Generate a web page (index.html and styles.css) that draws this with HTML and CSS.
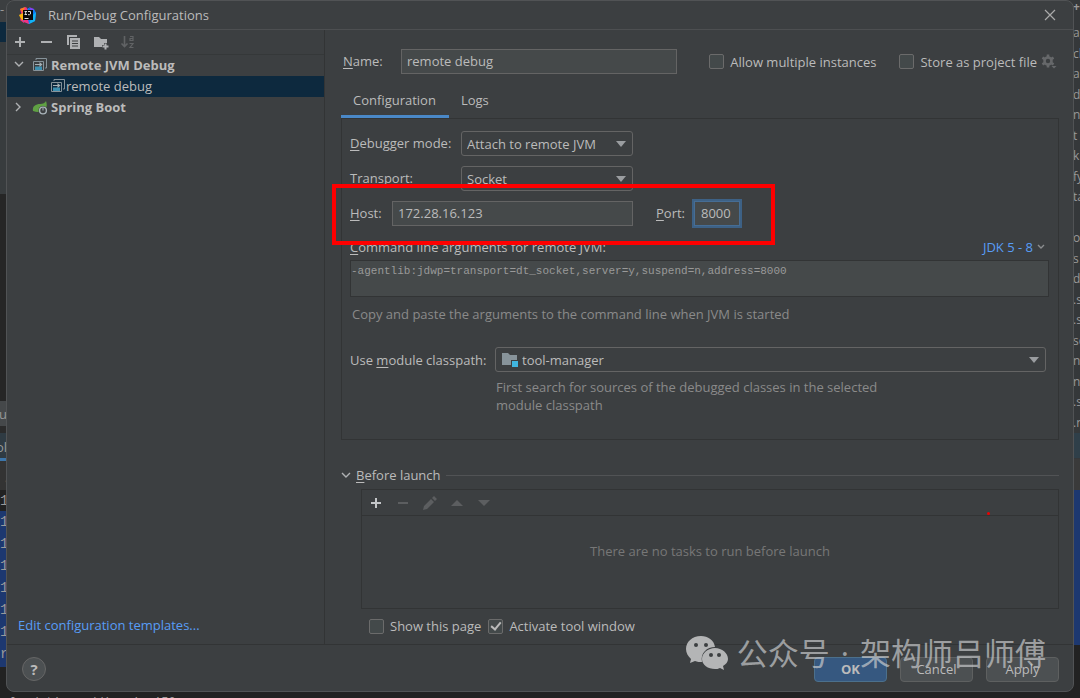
FILE: index.html
```html
<!DOCTYPE html>
<html lang="en">
<head>
<meta charset="utf-8">
<title>Run/Debug Configurations</title>
<link rel="stylesheet" href="styles.css">
</head>
<body>
<div class="ide" aria-hidden="true">
  <div class="ide-top">request.getting/mm</div>
  <div class="ide-left">
    <i class="l-head">-</i><i class="l-sel"></i><i class="l-tree"></i><i class="l-edit"></i><i class="l-tab">ru</i><i class="l-gap"></i><i class="l-active">ol</i><i class="l-bar">a</i><i class="l-line">1</i>
    <i class="l-mark">1</i><i class="l-mark">1</i><i class="l-mark">1</i><i class="l-mark">1</i><i class="l-mark">1</i><i class="l-mark">1</i><i class="l-mark">r</i>
  </div>
  <div class="ide-right">
    <i class="r-plus">+</i><i>ag</i><i>cle</i><i>an</i><i>d</i><i>np</i><i>t</i><i>k</i><i>fy</i><i>ta</i><i></i><i>ole</i><i>s</i><i>d</i><i>.s</i><i>.s</i><i>sc</i><i>n.</i><i>n.</i><i>.s</i><i>.n</i>
    <i class="r-tab"></i><i class="r-bar"></i><i class="r-mark"></i>
  </div>
  <div class="ide-bottom">load time adding in 150</div>
</div>

<div class="dialog" role="dialog" aria-labelledby="dlg-title">
  <header class="titlebar">
    <svg class="logo" width="18" height="18" viewBox="0 0 18 18"><path d="M1 3 7 1l3 4-5 12-4-3 2-4z" fill="#f5317f"/><path d="M1 3 6 1 4 7z" fill="#fc801d"/><path d="m0 9 4-2 2 9-4-3z" fill="#fdb60d"/><path d="m9 2 6 1 2 4-1 8-6 3-6-3z" fill="#087cfa"/><path d="m10 1 5 2-2 3z" fill="#8b3df0"/><path d="m4 12 5 1 1 5-5-2z" fill="#f5317f"/><path d="m13 10 4-4-1 9-6 3z" fill="#12b5f5"/><path d="M4 4h10v10H4z" fill="#090909"/><path d="M5.500 5.500h2.500M6.700 5.500v3M5.500 8.500h2.500M9 5.500h2.500v2.500l-1 .7H9M5.500 12.500h4" stroke="#ddd" fill="none"/></svg>
    <h1 id="dlg-title">Run/Debug Configurations</h1>
    <button class="icon-btn close" aria-label="Close"><svg width="12" height="12" viewBox="0 0 12 12"><path d="m1 1 10 10M11 1 1 11" stroke="#aaa" stroke-width="1.200"/></svg></button>
  </header>

  <div class="content">
    <aside class="sidebar">
      <div class="toolbar">
        <button class="icon-btn" aria-label="Add"><svg width="16" height="16" viewBox="0 0 16 16"><path d="M8 3v10M3 8h10" stroke="#afb1b3" stroke-width="2"/></svg></button>
        <button class="icon-btn" aria-label="Remove"><svg width="16" height="16" viewBox="0 0 16 16"><path d="M2 8h11" stroke="#afb1b3" stroke-width="2"/></svg></button>
        <button class="icon-btn" aria-label="Copy"><svg width="16" height="16" viewBox="0 0 16 16"><path d="M2 11V2h9" fill="none" stroke="#afb1b3" stroke-width="2"/><path d="M4 4h10v11H4z" fill="#afb1b3"/><path d="M6 7h6M6 9.500h6M6 12h6" stroke="#3c3f41"/></svg></button>
        <button class="icon-btn" aria-label="New folder"><svg width="16" height="16" viewBox="0 0 16 16"><path d="M1 3h5l2 2h6v4h-3v2H9v2H1z" fill="#afb1b3"/><path d="M12.500 9.500v6M9.500 12.500h6" stroke="#afb1b3" stroke-width="2"/></svg></button>
        <button class="icon-btn" aria-label="Sort" disabled><svg width="16" height="16" viewBox="0 0 16 16"><path d="M4.500 2v10M1.500 9.500l3 3 3-3" fill="none" stroke="#616365" stroke-width="1.600"/><path d="M10 2.500h3v4h-3V4.500h3M9.500 9.500h3.500l-3 4h3.500" fill="none" stroke="#616365" stroke-width="1.200"/></svg></button>
      </div>
      <ul class="tree">
        <li class="node group">
          <svg class="chev" width="10" height="10" viewBox="0 0 10 10"><path d="m1 2 4 4 4-4" fill="none" stroke="#afb1b3" stroke-width="1.400"/></svg>
          <svg width="16" height="16" viewBox="0 0 16 16"><path d="M4 3V1.500h10.500V11H13" fill="none" stroke="#87939a"/><path d="M1.500 4.500h10v9h-10z" fill="#3c3f41" stroke="#87939a"/><path d="M3 9.500h7V13H3z" fill="#3d8fb0"/><path d="M3 7.500h5" stroke="#a6b0b5"/><path d="m7.500 5 3 2.500-3 2.500z" fill="#a6b0b5"/></svg>
          <span>Remote JVM Debug</span>
        </li>
        <li class="node leaf selected">
          <svg width="16" height="16" viewBox="0 0 16 16"><path d="M4 3V1.500h10.500V11H13" fill="none" stroke="#87939a"/><path d="M1.500 4.500h10v9h-10z" fill="#0d293e" stroke="#87939a"/><path d="M3 9.500h7V13H3z" fill="#3d8fb0"/><path d="M3 7.500h5" stroke="#a6b0b5"/><path d="m7.500 5 3 2.500-3 2.500z" fill="#a6b0b5"/></svg>
          <span>remote debug</span>
        </li>
        <li class="node group">
          <svg class="chev" width="10" height="10" viewBox="0 0 10 10"><path d="m2 1 4 4-4 4" fill="none" stroke="#afb1b3" stroke-width="1.400"/></svg>
          <svg width="16" height="16" viewBox="0 0 16 16"><path d="M1 12c-1-5 3-7 7-7 3 0 5-1 6-3 1 3 1 5 0 7-3 4-8 5-13 3z" fill="#5fa043"/><circle cx="11" cy="11.500" r="4.500" fill="#3c3f41"/><circle cx="11" cy="11.500" r="3.400" fill="none" stroke="#aab4ba" stroke-width="1.400"/><path d="M11 9v2.500" stroke="#aab4ba"/></svg>
          <span>Spring Boot</span>
        </li>
      </ul>
      <a class="link templates" href="#">Edit configuration templates...</a>
    </aside>

    <main class="main">
      <div class="name-row">
        <label class="name-label" for="name"><u>N</u>ame:</label>
        <input class="field name-field" id="name" type="text" value="remote debug">
        <label class="check allow"><input type="checkbox">Allow multiple instances</label>
        <label class="check"><input type="checkbox">Store as project file</label>
        <svg class="gear" width="16" height="16" viewBox="0 0 16 16"><circle cx="7" cy="7" r="3.500" fill="none" stroke="#66686a" stroke-width="2.600"/><path d="M7 0.500v3M7 10.500v3M1.400 3.700l2.500 1.500M10 8.800l2.600 1.500M1.400 10.300l2.500-1.500M10 5.200l2.600-1.500" stroke="#66686a" stroke-width="2.600"/><path d="M10.500 12h5L13 14.500z" fill="#66686a"/></svg>
      </div>

      <div class="tabs" role="tablist">
        <button class="tab active" role="tab" aria-selected="true">Configuration</button>
        <button class="tab" role="tab" aria-selected="false">Logs</button>
      </div>

      <section class="panel">
        <div class="row">
          <label class="row-label" for="mode"><u>D</u>ebugger mode:</label>
          <div class="combo"><select id="mode"><option>Attach to remote JVM</option></select><svg class="arrow" width="10" height="6" viewBox="0 0 10 6"><path d="M0 0h10L5 6z"/></svg></div>
        </div>
        <div class="row">
          <label class="row-label" for="transport"><u>T</u>ransport:</label>
          <div class="combo"><select id="transport"><option>Socket</option></select><svg class="arrow" width="10" height="6" viewBox="0 0 10 6"><path d="M0 0h10L5 6z"/></svg></div>
        </div>
        <div class="row host-row">
          <label class="host-label" for="host"><u>H</u>ost:</label>
          <input class="field host-field" id="host" type="text" value="172.28.16.123">
          <label class="port-label" for="port"><u>P</u>ort:</label>
          <input class="field port-field" id="port" type="text" value="8000">
        </div>
        <div class="args-head">
          <label for="args"><u>C</u>ommand line arguments for remote JVM:</label>
          <a class="link jdk" href="#">JDK 5 - 8<svg width="8" height="6" viewBox="0 0 8 6"><path d="m1 1 3 3 3-3" fill="none" stroke="#8b8d8f" stroke-width="1.400"/></svg></a>
        </div>
        <textarea class="args" id="args" readonly>-agentlib:jdwp=transport=dt_socket,server=y,suspend=n,address=8000</textarea>
        <p class="hint args-hint">Copy and paste the arguments to the command line when JVM is started</p>
        <div class="module">
          <label for="module">Use <u>m</u>odule classpath:</label>
          <div class="combo module-combo">
            <svg class="folder" width="16" height="16" viewBox="0 0 16 16"><path d="M0 1h6l2 2h7v5H9v5H0z" fill="#87939a"/><path d="M10 9h6v6h-6z" fill="#40b6e0"/></svg>
            <select id="module"><option>tool-manager</option></select><svg class="arrow" width="10" height="6" viewBox="0 0 10 6"><path d="M0 0h10L5 6z"/></svg>
          </div>
          <p class="hint module-hint">First search for sources of the debugged classes in the selected module classpath</p>
        </div>
      </section>

      <section class="before">
        <h2 class="before-head"><svg width="10" height="10" viewBox="0 0 10 10"><path d="m1 3 4 4 4-4" fill="none" stroke="#afb1b3" stroke-width="1.400"/></svg><span><u>B</u>efore launch</span></h2>
        <div class="tasks">
          <div class="task-tools">
            <button class="icon-btn" aria-label="Add task"><svg width="16" height="16" viewBox="0 0 16 16"><path d="M8 3v10M3 8h10" stroke="#c4c6c8" stroke-width="2"/></svg></button>
            <button class="icon-btn" aria-label="Remove task" disabled><svg width="16" height="16" viewBox="0 0 16 16"><path d="M3 8h10" stroke="#5c5e60" stroke-width="2"/></svg></button>
            <button class="icon-btn" aria-label="Edit task" disabled><svg width="16" height="16" viewBox="0 0 16 16"><path d="m1 15 1-4 7-7 3 3-7 7zM10 3l2-2 3 3-2 2z" fill="#5c5e60"/></svg></button>
            <button class="icon-btn" aria-label="Move up" disabled><svg width="16" height="16" viewBox="0 0 16 16"><path d="M2 11h12L8 5z" fill="#5c5e60"/></svg></button>
            <button class="icon-btn" aria-label="Move down" disabled><svg width="16" height="16" viewBox="0 0 16 16"><path d="M2 5h12l-6 6z" fill="#5c5e60"/></svg></button>
          </div>
          <p class="empty">There are no tasks to run before launch</p>
          <span class="dot"></span>
        </div>
        <div class="options">
          <label class="check"><input type="checkbox">Show this page</label>
          <label class="check"><input type="checkbox" checked>Activate tool window</label>
        </div>
      </section>
    </main>
  </div>

  <footer class="footer">
    <button class="help" aria-label="Help">?</button>
    <button class="btn primary">OK</button>
    <button class="btn">Cancel</button>
    <button class="btn">Apply</button>
  </footer>

  <div class="watermark">
    <svg width="42" height="34" viewBox="0 0 42 34"><path d="M15 0C6 0 0 6 0 13c0 4 2 7 5 10l-1 4 5-2c2 1 5 1 7 1-2-9 5-15 13-15C28 4 22 0 15 0z"/><path d="M29 12c-7 0-13 5-13 11s6 10 13 10c2 0 3 0 5-1l4 2-1-4c3-2 5-4 5-7 0-6-6-11-13-11z"/><g class="eyes"><circle cx="10" cy="9" r="2"/><circle cx="20" cy="9" r="2"/><circle cx="25" cy="19" r="2"/><circle cx="33" cy="19" r="2"/></g></svg>
    <span>公众号<span class="sep"> · </span>架构师吕师傅</span>
  </div>
</div>
</body>
</html>
```

FILE: styles.css
```css
*, ::before, ::after { box-sizing: border-box; }

body {
  margin: 0;
  min-height: 100vh;
  display: flex;
  padding: 0 6px 6px;
  background: #222;
  color: #bbb;
  font: 13px/18px "Open Sans", "Noto Sans CJK SC", sans-serif;
  overflow: hidden;
}

button, input, select, textarea { font: inherit; color: inherit; margin: 0; }
h1, h2, p, ul { margin: 0; padding: 0; font-size: 13px; font-weight: 400; }
u { text-underline-offset: 2px; }

/* IDE window behind the dialog */
.ide { position: absolute; inset: 0; overflow: hidden; color: #999; background: #222; }
.ide i { display: block; flex: none; font-style: normal; overflow: hidden; white-space: nowrap; }
.ide-top {
  position: absolute; top: 0; left: 0; right: 0; height: 12px;
  padding-left: 212px; background: #333537;
  font: 12px/2px "Liberation Mono", monospace;
}
.ide-left, .ide-right { position: absolute; top: 0; bottom: 0; width: 10px; display: flex; flex-direction: column; }
.ide-left { left: 0; }
.ide-right { right: 0; background: linear-gradient(#35383a 490px, #222 490px); }
.ide-right i { height: 20px; padding-left: 3px; line-height: 20px; font-size: 12px; }
.ide-right i:nth-child(even) { margin-bottom: 1px; }
.ide-right .r-plus { height: 23px; font-weight: 700; line-height: 14px; }
.ide-right .r-tab { height: 25px; background: #2f3f49; }
.ide-right .r-bar { height: 31px; background: #3a3a3a; }
.ide-right .r-mark { height: 155px; background: #1d3870; }
.l-head { height: 22px; background: #3c3f41; }
.l-sel { height: 20px; background: #0d293e; }
.l-tree { height: 152px; background: #383c3e; }
.l-edit { height: 207px; background: #262626; }
.l-tab { height: 25px; background: #45484a; line-height: 26px; direction: rtl; padding-right: 3px; }
.l-gap { height: 7px; background: #2b2b2b; }
.l-active { height: 28px; background: #2f3b43; border-bottom: 3px solid #3c76ab; line-height: 28px; direction: rtl; padding-right: 3px; }
.l-bar { height: 29px; background: #333; color: #b5533c; padding-left: 5px; line-height: 34px; }
.l-line, .l-mark { height: 22px; font: 14px/22px "Liberation Mono", monospace; }
.l-line { height: 21px; }
.l-mark { background: #1d3870; }
.l-mark:last-child { height: 24px; }
.ide-bottom { position: absolute; left: 10px; bottom: -12px; height: 13px; font: 12px/13px "Liberation Mono", monospace; }

.dialog {
  position: relative;
  flex: 1;
  display: flex;
  flex-direction: column;
  min-width: 0;
  background: #3c3f41;
  border: 1px solid #515355;
  border-radius: 8px;
}

.titlebar { display: flex; align-items: center; height: 29px; padding: 0 17px 0 12px; border-bottom: 1px solid #4d4f51; }
.logo { margin-right: 11px; }
.titlebar h1 { flex: 1; }

.icon-btn { display: flex; padding: 0; border: 0; background: none; }
.content { flex: 1; display: flex; }

.sidebar { width: 318px; flex: none; display: flex; flex-direction: column; border-right: 1px solid #323435; }
.toolbar { display: flex; gap: 11px; align-items: center; height: 25px; padding-left: 5px; border-bottom: 1px solid #353839; }
.tree { list-style: none; flex: 1; }
.node { display: flex; align-items: center; height: 21px; padding: 0 0 1px 7px; }
.group { font-weight: 700; }
.group .chev { margin-right: 8px; }
.group span { margin-left: 3px; }
.leaf { padding-left: 43px; }
.selected { background: #0d293e; }
.link { color: #589df6; text-decoration: none; }
.templates { padding: 0 11px 10px; }

.main { flex: 1; min-width: 0; padding: 19px 14px 7px 16px; }
.name-row { display: flex; align-items: center; padding-left: 2px; }
.name-label, .row-label, .host-label, .port-label { padding-bottom: 2px; }
.name-label { width: 58px; }
.field { height: 25px; padding: 0 5px 2px; background: #45494a; border: 1px solid #646464; outline: 0; min-width: 0; }
.name-field { flex: 0 1 276px; }
.check { display: flex; align-items: center; white-space: nowrap; }
.allow { margin-left: auto; margin-right: 23px; }
.check input {
  appearance: none;
  display: grid;
  place-items: center;
  width: 15px;
  height: 15px;
  margin-right: 6px;
  background: #43494a;
  border: 1px solid #6b6b6b;
  border-radius: 2px;
}
.check input:checked::before {
  content: "";
  width: 6px;
  height: 10px;
  margin-bottom: 2px;
  border: solid #bbb;
  border-width: 0 2px 2px 0;
  transform: rotate(40deg);
}
.gear { margin: 0 2px 0 4px; }

.tabs { display: flex; height: 44px; align-items: flex-end; }
.tab { height: 35px; padding: 2px 13px 0 12px; border: 0; border-bottom: 3px solid transparent; background: none; }
.active { border-color: #4a88c7; }

.panel { padding: 12px 9px 25px 8px; border: 1px solid #323435; }
.row { display: flex; align-items: center; height: 25px; margin-bottom: 10px; }
.row-label { width: 111px; }
.combo { display: flex; align-items: center; width: 172px; height: 25px; padding-right: 6px; border: 1px solid #646464; border-radius: 3px; }
.combo select { flex: 1; min-width: 0; padding: 0 5px; border: 0; outline: 0; background: none; appearance: none; }
.arrow { fill: #9a9da0; }
.host-row { position: relative; margin-bottom: 12px; }
.host-row::after {
  content: "";
  position: absolute;
  top: -17px;
  left: -18px;
  width: 443px;
  height: 61px;
  border: 4px solid #fe0000;
  pointer-events: none;
}
.host-label { width: 42px; }
.host-field { width: 241px; }
.port-label { width: 38px; margin-left: 23px; }
.port-field { width: 46px; padding: 0 6px 2px; border-color: #466d94; box-shadow: 0 0 0 2px #3d6185; }
.args-head { display: flex; justify-content: space-between; height: 18px; margin-bottom: 4px; }
.jdk { display: flex; align-items: center; gap: 4px; padding-right: 4px; }
.args {
  display: block;
  width: 100%;
  height: 37px;
  padding: 3px 0;
  color: #999;
  background: #45494a;
  border: 1px solid #323435;
  outline: 0;
  resize: none;
  font: 11px/14px "Liberation Mono", monospace;
}
.hint { color: #8a8a8a; }
.args-hint { margin: 8px 2px 24px; }
.module { display: grid; grid-template-columns: 145px 1fr; padding-right: 3px; align-items: center; row-gap: 6px; }
.module-combo { width: 100%; padding-left: 6px; }
.module-combo select { padding-left: 4px; }
.module-hint { grid-column: 2; max-width: 400px; padding-left: 1px; }

.before { padding-top: 26px; }
.before-head { display: flex; align-items: center; gap: 5px; }
.before-head::after { content: ""; flex: 1; height: 1px; background: #515355; }
.tasks { position: relative; height: 120px; margin: 5px 0 0 20px; border: 1px solid #323435; }
.task-tools { display: flex; align-items: center; gap: 11px; height: 26px; padding-left: 6px; border-bottom: 1px solid #323435; }
.empty { padding-top: 26px; text-align: center; color: #777; }
.dot { position: absolute; right: 68px; top: 22px; width: 3px; height: 3px; border-radius: 50%; background: #e00; }
.options { display: flex; gap: 7px; padding: 8px 0 0 28px; }

.footer { display: flex; align-items: center; gap: 13px; height: 47px; padding: 2px 14px 0 15px; border-top: 1px solid #323435; }
.help { width: 24px; height: 24px; margin-right: auto; padding: 0; border: 1px solid #666; border-radius: 50%; background: #4c5052; font-size: 15px; font-weight: 700; line-height: 20px; }
.btn { width: 73px; height: 25px; padding: 0; background: #4c5052; border: 1px solid #5e6060; border-radius: 4px; }
.primary { background: #365880; border-color: #4c708c; font-weight: 700; }

.watermark {
  position: absolute;
  right: 27px;
  bottom: 15px;
  display: flex;
  align-items: center;
  gap: 9px;
  color: rgba(200, 202, 204, 0.7);
  font: 31px/46px "Noto Sans CJK SC", sans-serif;
  white-space: nowrap;
  pointer-events: none;
}
.watermark .sep { padding: 0 3px; font-family: "Open Sans", sans-serif; }
.watermark svg { fill: #b4b5b6; }
.watermark .eyes { fill: #3c3f41; }
```
